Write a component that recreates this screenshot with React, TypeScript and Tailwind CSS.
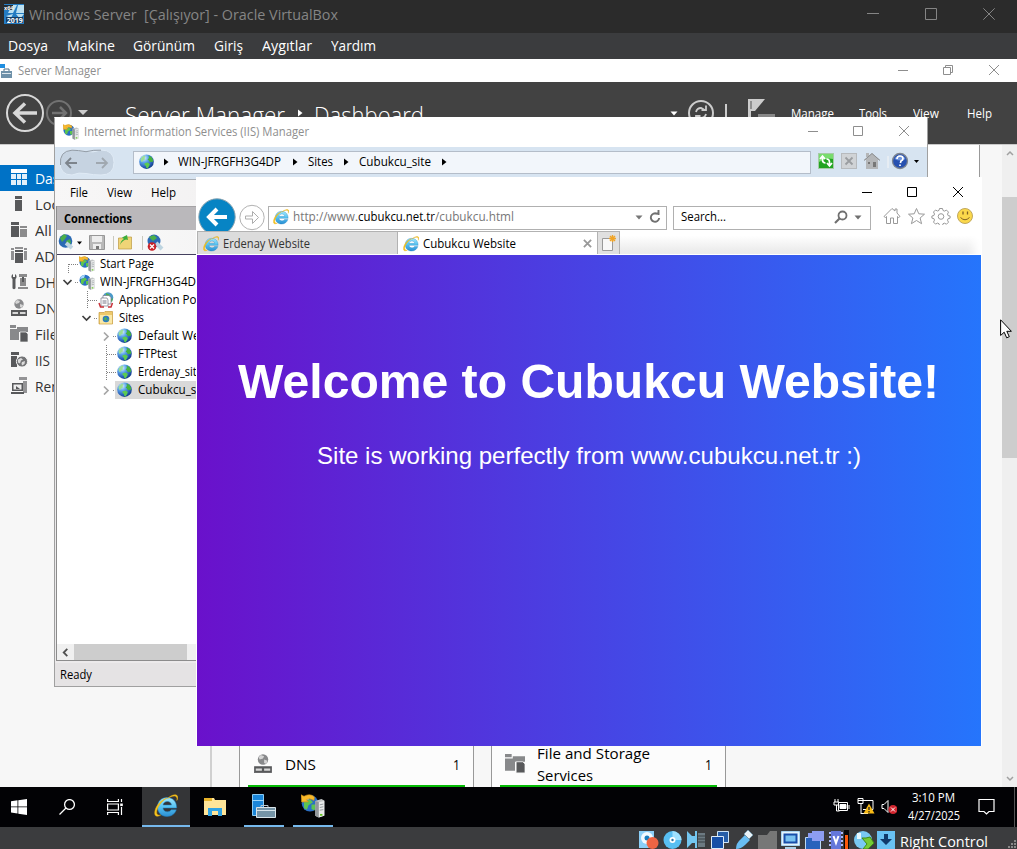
import { useLayoutEffect, useRef, useState } from "react";
import type { ReactNode } from "react";

/* Text run squeezed horizontally to a given advance width. */
function Label({ w, className = "", children }: { w: number; className?: string; children: ReactNode }) {
  const ref = useRef<HTMLSpanElement>(null);
  const [k, setK] = useState(1);
  useLayoutEffect(() => {
    if (ref.current && ref.current.offsetWidth) {
      const r = ref.current.getBoundingClientRect();
      setK((prev) => w / (r.width / prev));
    }
  }, [w]);
  return (
    <span className={`block shrink-0 whitespace-pre ${className}`} style={{ width: w }}>
      <span ref={ref} className="inline-block origin-left" style={{ transform: `scaleX(${k})` }}>
        {children}
      </span>
    </span>
  );
}

function Globe({ className = "size-4" }: { className?: string }) {
  return (
    <svg viewBox="0 0 16 16" className={`shrink-0 ${className}`}>
      <defs>
        <radialGradient id="sea" cx="0.33" cy="0.25" r="0.85">
          <stop offset="0" stopColor="#e0f4ff" />
          <stop offset="0.35" stopColor="#5ea6ec" />
          <stop offset="0.75" stopColor="#2259b2" />
          <stop offset="1" stopColor="#0c2f70" />
        </radialGradient>
      </defs>
      <circle cx="7.500" cy="7.700" r="7.300" fill="url(#sea)" />
      <path d="M1.500 5Q3 2 5.500 1.400l1 1.200-1 1.400.7 1.300-2 1.200-1 1.600-1.200-.6z" fill="#9bdd96" />
      <path d="M9.500 1.500l3 1.500 1.700 3.300-.6 2-1.300-.5-1.400.5-1-1.700L8.600 5.600 10 4z" fill="#45b23f" />
      <path d="M5.600 9.200l3-.8 2.200 1.600-.7 2.200-1.800 2.400-1-.5-.3-2.200-1.500-1.200z" fill="#5ccb50" />
    </svg>
  );
}

function IisIcon({ className = "size-4", gold = true }: { className?: string; gold?: boolean }) {
  return (
    <svg viewBox="0 0 16 16" className={`shrink-0 ${className}`}>
      <circle cx="6" cy="6.200" r="5.500" fill="#2a6fc6" />
      <path d="M1 5a5 5 0 0 1 5-4l-1 3z" fill="#a5d8fa" />
      <path d="M2 5.500l4-2 2 2-3 2-1 3-2-1zM7 7h3l-1 4-2-1z" fill="#5cc450" />
      {gold && <path d="M0 .5l2 1Q6-.8 9 2L8.600 4.300Q5.800 2.400 3.600 3.800L5 5.200 .4 5.400z" fill="#f8b92a" stroke="#c98a12" strokeWidth=".4" />}
      <path d="M9.500 4.600L13.600 3.400l2 1v10l-4 1.300-2.100-1.200z" fill="#c3c6c7" />
      <path d="M9.500 4.600l2.300.8v10.300l-2.300-1.200z" fill="#92979b" />
      <path d="M12 5.500l3.500-.9v9.900l-3.500 1.200z" fill="#e8eaea" />
      <path d="M12.500 7.200l2.400-.5M12.500 9l2.400-.5M12.500 10.800l2.400-.4" stroke="#8d9498" strokeWidth=".6" />
      <path d="M12.700 13.300h1.600v1.200h-1.600z" fill="#65c720" />
    </svg>
  );
}

function IeLogo({ className = "size-4" }: { className?: string }) {
  return (
    <svg viewBox="0 0 24 24" className={`shrink-0 ${className}`}>
      <defs>
        <linearGradient id="ie" x1="0" y1="0" x2="0" y2="1">
          <stop offset="0" stopColor="#a2e8fd" />
          <stop offset="0.5" stopColor="#55c1f0" />
          <stop offset="1" stopColor="#2a8ed2" />
        </linearGradient>
      </defs>
      <path
        fillRule="evenodd"
        fill="url(#ie)"
        stroke="#1f7fbf"
        strokeWidth=".5"
        d="M13 3.500c5.700 0 9.700 4 9.700 10.500H9c.2 2.300 1.900 3.800 4.300 3.800 1.800 0 3.200-.7 3.900-2h5.100C21 19.800 17.600 22.500 13 22.500 7.300 22.500 3.500 18.600 3.500 13S7.300 3.500 13 3.500zM9 11h8.500c-.3-2.200-1.900-3.500-4.100-3.500S9.400 8.800 9 11z"
      />
      <path
        fill="#f8c81c"
        stroke="#e0a818"
        strokeWidth=".5"
        d="M22.800 6.500c.5-2 .2-3.500-1-4.100-1.800-.9-5 0-8.300 2.100C16.700 1.500 20.700 0 22.800 1.300c1.400 1 1.300 3.200 0 5.200zM13 4C7 7.500 3 13.600 2.700 18c-.2 2.600 1.300 3.700 4 3-3.400 2.200-6 1.600-6-2C.7 13.500 6 6 13 4z"
      />
    </svg>
  );
}

type Pane = "min" | "max" | "restore" | "close";
function Ctl({ kind, big = false }: { kind: Pane; big?: boolean }) {
  return (
    <svg viewBox="0 0 12 12" className="size-3 shrink-0" fill="none" stroke="currentColor" strokeWidth="1">
      {kind === "min" && <path d={big ? "M0 5.500h12" : "M2 6.500h10"} />}
      {kind === "max" && <path d={big ? "M.5 .5h11v11H.5z" : "M1.500 1.500h9v9h-9z"} />}
      {kind === "restore" && <path d="M1.500 3.500h7v7h-7zM3.500 3.500v-2h7v7h-2" />}
      {kind === "close" && <path d={big ? "M.3 .3l11.400 11.400M11.700 .3L.3 11.700" : "M1 1l10 10M11 1L1 11"} />}
    </svg>
  );
}

function Tri({ className = "", down = false }: { className?: string; down?: boolean }) {
  return (
    <svg viewBox="0 0 8 8" className={`size-2 shrink-0 ${className}`} fill="currentColor">
      <path d={down ? "M.5 2.500h7L4 6.500z" : "M2 .5v7L6.500 4z"} />
    </svg>
  );
}

function SideIcon({ kind, className = "size-[18px]" }: { kind: string; className?: string }) {
  return (
    <svg viewBox="0 0 18 18" className={`shrink-0 ${className}`} fill="#58595b">
      {kind === "dash" && (
        <>
          <path fill="#fff" d="M1 0h16v4H1z" />
          <path fill="#e3f0fa" d="M1 5h5v5H1zM7 5h4v5H7zM12 5h5v5h-5zM1 11h5v5H1zM7 11h4v5H7zM12 11h5v5h-5z" />
        </>
      )}
      {kind === "local" && <path d="M5 1h7v3H5zM5 5h7v11H5z" />}
      {kind === "all" && (
        <>
          <path d="M1 1h8v3H1zM1 5h8v11H1z" />
          <path fill="#8b8b8c" d="M10 5h7v2h-7zM10 8h7v8h-7z" />
        </>
      )}
      {kind === "ad" && (
        <>
          <path fill="#909092" d="M1 1h3v2H1zM1 4h3v9H1zM14 1h3v2h-3zM14 4h3v9h-3zM5 0h8v2H5z" />
          <path d="M5 3h8v2H5zM5 6h8v10H5z" />
        </>
      )}
      {kind === "dhcp" && (
        <>
          <path d="M3 1v3h2V1c2 1 2 4 .5 5v9c0 1.500-3 1.500-3 0V6C1 5 1 2 3 1z" />
          <path fill="#8b8b8c" d="M9 1h8v3H9zM10 5h6v8h-6zM8 14h10v2H8z" />
          <path d="M12 4h2v5h-2z" />
        </>
      )}
      {kind === "dns" && (
        <>
          <circle cx="9" cy="5" r="4.700" fill="#88898b" />
          <path d="M7 1l3 1-1 2-3 1-1-2zM10 5l3 1-1 3-2-1z" fill="#d4d4d4" />
          <path d="M1 11h16v6H1z" />
          <path fill="#d8d8d8" d="M2.500 13h5.500v2H2.500zM10 13h5.500v2H10z" />
        </>
      )}
      {kind === "file" && (
        <>
          <path fill="#88898b" d="M0 0h6v3H0zM0 4h9v11H0zM7 2h11v5H9V4H7z" />
          <path d="M10 7h6l2 2v8h-8z" stroke="#f5f5f5" strokeWidth=".7" />
        </>
      )}
      {kind === "iis" && (
        <>
          <path d="M1 1h8v3H1zM1 5h6v11H1z" />
          <circle cx="12" cy="10.500" r="5.600" fill="#737476" stroke="#f7f7f7" />
          <path fill="#dcdcdc" d="M8 8.500l3-1.500 2 1.500-2 1-1 3-2-1zM12 11l3-1-.5 3-2.500 1.500-.5-2z" />
        </>
      )}
      {kind === "remote" && (
        <>
          <path fill="#949496" d="M9 0h8v3H9zM13 4h4v12h-4z" />
          <path d="M2 6h11v8H2zM1 15h13v2H1z" />
          <path fill="#eee" d="M3.500 7.500h8v5h-8z" />
          <path d="M6 12V9l4 3z" />
        </>
      )}
    </svg>
  );
}

const roles: [string, string, number][] = [
  ["dash", "Dashboard", 72],
  ["local", "Local Server", 83],
  ["all", "All Servers", 72],
  ["ad", "AD DS", 42],
  ["dhcp", "DHCP", 39],
  ["dns", "DNS", 31],
  ["file", "File and Storage Services", 166],
  ["iis", "IIS", 15],
  ["remote", "Remote Access", 96],
];

function ServerManager() {
  return (
    <section className="flex h-[728px] flex-col bg-[#f7f7f7]">
      <header className="flex h-[23px] items-center bg-white text-[12px] text-[#8e8e8e]">
        <svg viewBox="0 0 13 14" className="h-[14px] w-[13px]">
          <path d="M0 0h5v4H0z" fill="#1f8ee0" />
          <path d="M1 7h11v7H1z" fill="#6f91a9" />
          <path d="M4 7V5h5v2" fill="none" stroke="#506f84" />
          <path d="M2 9.500h9" stroke="#dfe8ee" />
        </svg>
        <Label w={83} className="ml-[5px]">Server Manager</Label>
        <div className="mb-px ml-auto mr-[17px] flex gap-[34px]">
          <Ctl kind="min" /><Ctl kind="restore" /><Ctl kind="close" />
        </div>
      </header>
      <div className="flex h-[63px] items-center border-b border-[#c9c9c9] bg-[#424242] text-white">
        <svg viewBox="0 0 90 40" className="ml-[5px] h-10 w-[90px] shrink-0" fill="none">
          <circle cx="20" cy="20" r="18" stroke="#d8d8d8" strokeWidth="2" />
          <path d="M32 20H10M20 10.500L10 20l10 9.500" stroke="#d8d8d8" strokeWidth="3.500" />
          <circle cx="54" cy="20" r="12" stroke="#727272" strokeWidth="2" />
          <path d="M47 20h13M55 14l6 6-6 6" stroke="#727272" strokeWidth="2.500" />
          <path d="M73 17h10l-5 5z" fill="#ccc" />
        </svg>
        <Label w={160} className="ml-[30px] pt-[3px] text-[24px] font-light">Server Manager</Label>
        <Tri className="ml-[11px]" />
        <Label w={110} className="ml-[10px] pt-[3px] text-[24px] font-light">Dashboard</Label>
        <Tri down className="ml-[246px]" />
        <svg viewBox="0 0 90 32" className="ml-[9px] h-8 w-[90px] shrink-0" fill="none" stroke="#ccc">
          <circle cx="14" cy="16" r="12" strokeWidth="2" />
          <path d="M9 15q1-4 5-4l3 1.500M19 8.500v4.500h-4.500M19 17q-1 4-5 4l-3-1.500M9 23.500V19h4.500" strokeWidth="1.800" />
          <path d="M39 7v16" strokeWidth="2" />
          <path d="M61 2h17l-10 12h-4v15h-3z" fill="#ccc" stroke="none" />
          <path d="M64 4v8" stroke="#555" />
          <path d="M71 18.500h17" strokeWidth="3" stroke="#888" />
        </svg>
        <nav className="ml-[14px] flex pt-[2px] text-[12px]">
          <Label w={43}>Manage</Label>
          <Label w={28} className="ml-[25px]">Tools</Label>
          <Label w={26} className="ml-[26px]">View</Label>
          <Label w={25} className="ml-[28px]">Help</Label>
        </nav>
      </div>
      <div className="flex min-h-0 flex-1">
        <nav className="w-[210px] overflow-hidden pt-[20px]">
          {roles.map(([icon, name, w], i) => (
            <div key={name} className={`flex h-[26px] items-center pl-[10px] text-[15px] ${i === 0 ? "bg-[#0072c6] text-white" : "text-[#333]"}`}>
              <SideIcon kind={icon} />
              <Label w={w} className="ml-[7px]">{name}</Label>
            </div>
          ))}
        </nav>
        <main className="flex flex-1 flex-col justify-between border-l-2 border-[#d0d0d0]">
          <div className="h-[34px] w-[768px] border-r border-[#999] bg-white" />
          <div className="flex gap-[17px] pl-[27px]">
            <div className="flex h-[43px] w-[235px] flex-col border-x border-[#999] bg-[#fcfcfc]">
              <div className="flex min-h-0 flex-1 items-center pb-px pl-[13px] text-[15px] text-black">
                <SideIcon kind="dns" className="size-5" />
                <Label w={31} className="ml-[12px]">DNS</Label>
                <Label w={7} className="ml-auto mr-[13px]">1</Label>
              </div>
              <div className="mx-2 h-[2px] bg-[#05bb05]" />
            </div>
            <div className="flex h-[43px] w-[235px] flex-col border-x border-[#999] bg-[#fcfcfc]">
              <div className="flex min-h-0 flex-1 items-center pb-px pl-[13px] text-[15px] text-black">
                <SideIcon kind="file" className="size-5" />
                <div className="ml-[12px] leading-[22px]">
                  <Label w={113}>File and Storage</Label>
                  <Label w={56}>Services</Label>
                </div>
                <Label w={7} className="ml-auto mr-[13px]">1</Label>
              </div>
              <div className="mx-2 h-[2px] shrink-0 bg-[#05bb05]" />
            </div>
          </div>
        </main>
        <div className="flex w-[15px] flex-col items-center bg-[#efefef] text-[#a0a0a0]">
          <svg viewBox="0 0 8 6" className="mt-[5px] h-[6px] w-2" fill="none" stroke="currentColor" strokeWidth="1.500"><path d="M1 5l3-3 3 3" /></svg>
          <div className="mt-[41px] h-[261px] w-full bg-[#cdcdcd]" />
          <svg viewBox="0 0 8 6" className="mt-auto mb-[5px] h-[6px] w-2" fill="none" stroke="currentColor" strokeWidth="1.500"><path d="M1 1l3 3 3-3" /></svg>
        </div>
      </div>
    </section>
  );
}

function Chevron({ open }: { open: boolean }) {
  return (
    <svg viewBox="0 0 10 10" className="size-[10px] shrink-0" fill="none" stroke={open ? "#404040" : "#a6a6a6"} strokeWidth="1.700">
      <path d={open ? "M1.500 3l4 4 4-4" : "M4 1.500l4 4-4 4"} />
    </svg>
  );
}

function PoolIcon() {
  return (
    <svg viewBox="0 0 16 16" className="size-4 shrink-0">
      <circle cx="10" cy="5.500" r="5.300" fill="#4b9ac9" />
      <path d="M8 1l4 2-1 3-3-1zM12 8l3-2-1 4z" fill="#4eb24c" />
      <path d="M5 3.500h6l2 2V12H5z" fill="#fff" stroke="#778" strokeWidth=".7" />
      <path d="M3 6h6l1 2v6H3z" fill="#fff" stroke="#778" strokeWidth=".7" />
      <path d="M4.500 9h4M4.500 11h4" stroke="#778" />
      <path d="M1 11l1.500 4H6M14.500 11L13 15h-3" fill="none" stroke="#c8323a" strokeWidth="1.500" />
    </svg>
  );
}

function FolderGlobe() {
  return (
    <svg viewBox="0 0 16 16" className="size-4 shrink-0">
      <path d="M1 2.500h5l1-1h7.500v12.500H1z" fill="#edc96b" stroke="#c79b3f" strokeWidth=".7" />
      <path d="M2 5h12v8.500H2z" fill="#fae8a8" />
      <circle cx="8" cy="9" r="3.300" fill="#2c7ac0" />
      <path d="M6 8l2-1 1 2-2 2zM9 10l2-1-1 2z" fill="#52b64b" />
    </svg>
  );
}

type Branch = "open" | "closed" | "start" | "leaf";
function TreeRow({ pad, branch, icon, w, text, selected = false }: { pad: string; branch: Branch; icon: ReactNode; w: number; text: string; selected?: boolean }) {
  const expandable = branch === "open" || branch === "closed";
  return (
    <div className={`flex h-[18px] items-center ${pad}`}>
      <div className="flex w-[18px] shrink-0 items-center justify-end">
        {expandable ? (
          <>
            <Chevron open={branch === "open"} />
            <span className="ml-[3px] mr-[1px] w-[3px] border-b border-dotted border-[#888]" />
          </>
        ) : (
          <svg viewBox="0 0 12 18" className="h-[18px] w-3 shrink-0" fill="none" stroke="#808080" strokeDasharray="1 1">
            <path d={branch === "start" ? "M1.500 9v9M2 9.500h10" : "M1.500 0v18M2 9.500h9"} />
          </svg>
        )}
      </div>
      <div className={`flex h-full items-center ${selected ? "-ml-[2px] bg-[#d9d9d9] pl-[2px] pr-3" : ""}`}>
        {icon}
        <Label w={w} className="ml-[5px]">{text}</Label>
      </div>
    </div>
  );
}

function IisManager() {
  return (
    <section className="absolute left-[54px] top-[58px] flex h-[570px] w-[874px] flex-col border border-[#a0a0a0] border-t-[#fff] bg-[#eceaeb] text-[12px] text-black">
      <header className="flex h-[29px] shrink-0 items-center bg-white pb-px pl-[8px] text-[#8e8e8e]">
        <IisIcon />
        <Label w={225} className="ml-[5px]">Internet Information Services (IIS) Manager</Label>
        <div className="mb-[2px] ml-auto mr-[17px] flex gap-[34px]"><Ctl kind="min" /><Ctl kind="max" /><Ctl kind="close" /></div>
      </header>
      <div className="flex h-[33px] shrink-0 items-center border-b border-[#a9afb6] bg-[#d7e4f1] pb-[2px] pl-[4px]">
        <svg viewBox="0 0 56 27" className="h-[27px] w-[56px] shrink-0">
          <path d="M13 1Q20 1 27 2.500T42 1Q55 1 55 13.500T42 26Q34 26 27 24.500T13 26Q1 26 1 13.500T13 1z" fill="#c6d3e1" stroke="#e0ebf6" />
          <path d="M1.500 16Q0 2 13 1.200q6 0 14 1.500 8-2 15-1.500" fill="none" stroke="#929ba5" />
          <path d="M18 14H7M12 9l-5 5 5 5" fill="none" stroke="#7d848c" strokeWidth="1.800" />
          <path d="M37 14h11M43 9l5 5-5 5" fill="none" stroke="#a0a8b0" strokeWidth="1.800" />
        </svg>
        <div className="ml-[18px] flex h-[23px] w-[678px] items-center border border-[#b4bdc9] bg-[#f2f6fb] pl-[5px]">
          <Globe />
          <Tri className="ml-[7px]" />
          <Label w={103} className="ml-[8px]">WIN-JFRGFH3G4DP</Label>
          <Tri className="ml-[10px]" />
          <Label w={25} className="ml-[9px]">Sites</Label>
          <Tri className="ml-[9px]" />
          <Label w={72} className="ml-[9px]">Cubukcu_site</Label>
          <Tri className="ml-[9px]" />
        </div>
        <svg viewBox="0 0 104 20" className="ml-[5px] h-5 w-[104px] shrink-0">
          <rect x="2.500" y="1.500" width="15" height="15" fill="#22a422" stroke="#a5cba5" />
          <path d="M3 2h14v5q-7-2-14 3z" fill="#78dc6e" />
          <path d="M9.500 11q-3 0-3-3V5M4 7l2.500-3L9 7M10.500 7q3 0 3 3v3M11 11l2.500 3 2.500-3" stroke="#fff" strokeWidth="1.700" fill="none" />
          <rect x="25.500" y="1.500" width="15" height="15" fill="#d0d3d6" stroke="#b7babd" />
          <path d="M29.500 5.500l7 7M36.500 5.500l-7 7" stroke="#9a9da0" strokeWidth="1.800" />
          <path d="M48 8l8-7 8 7h-2v9H50V8zM50 1h3v4h-3z" fill="#b4b6b8" />
          <path d="M48 8.500l8-7 8 7" fill="none" stroke="#8c8e90" />
          <path d="M52 10h2v2h-2zM57 10h3v5h-3z" fill="#777" />
          <path d="M72 4v12" stroke="#f5f5f5" />
          <circle cx="84" cy="9" r="7.500" fill="#2650b0" stroke="#7d8590" strokeWidth="1.300" />
          <path d="M78.500 7a6 6 0 0 1 11 0q-5 3-11 0" fill="#6d94df" />
          <path d="M81 7q0-3 3-3t3 2.500q0 1.700-2 2.500l-.6 2M84 12.500v1.500" stroke="#fff" strokeWidth="1.700" fill="none" />
          <path d="M98 8h5l-2.500 3z" />
        </svg>
      </div>
      <nav className="flex h-[26px] shrink-0 items-center bg-gradient-to-r from-[#f8f7f7] to-[#dedcdd] pl-[15px]">
        <Label w={18}>File</Label>
        <Label w={25} className="ml-[19px]">View</Label>
        <Label w={25} className="ml-[19px]">Help</Label>
      </nav>
      <div className="ml-[1px] flex min-h-0 flex-1 flex-col border-b border-l border-[#8c8c8c] bg-white">
        <div className="flex h-[24px] shrink-0 items-center border-t border-[#a5a3a5] bg-[#bab8bb] pl-[7px] pt-px font-bold"><Label w={68}>Connections</Label></div>
        <div className="flex h-[25px] shrink-0 items-center border-b border-[#44405e] bg-gradient-to-r from-[#fafafa] to-[#dedcdd] pl-[1px] pt-px">
          <svg viewBox="0 0 110 20" className="h-5 w-[110px]">
            <circle cx="7.500" cy="8" r="6.800" fill="#2b6ab5" />
            <path d="M2 5l4-4 3 2-2 3-3 3zM8 8l4-2 1 4-4 3z" fill="#4aaf4a" />
            <path d="M8 10l6 5" stroke="#bed4e0" strokeWidth="4" />
            <path d="M19 8.500h5l-2.500 3z" />
            <path d="M31.500 2.500h15v14h-15z" fill="#b9b9b9" stroke="#979797" />
            <path d="M34 3h10v6H34zM35 11h8v5h-8z" fill="#ededed" /><path d="M38 13h3v3h-3z" fill="#777" />
            <path d="M55.500 3v14M84.500 3v14" stroke="#c9c8bd" />
            <path d="M60.500 5h5l1-1h7v12h-13z" fill="#efd477" stroke="#bb9944" strokeWidth=".7" />
            <path d="M62 12q1-5 4-6l-2-1.500 5-2.500 1 5-2-.5q-4 1-6 5.500z" fill="#3cae3c" />
            <circle cx="96" cy="8" r="6.500" fill="#2b6ab5" /><path d="M91 4l5-2 3 3-4 3z" fill="#4aaf4a" />
            <path d="M98 10l6 6" stroke="#bed4e0" strokeWidth="4" />
            <circle cx="94" cy="13.500" r="4.300" fill="#c92127" /><path d="M92 11.500l4 4m0-4l-4 4" stroke="#fff" strokeWidth="1.300" />
          </svg>
        </div>
        <div className="flex-1">
          <TreeRow pad="pl-[4px]" branch="start" icon={<IisIcon />} w={54} text="Start Page" />
          <TreeRow pad="pl-[4px]" branch="open" icon={<IisIcon gold={false} />} w={103} text="WIN-JFRGFH3G4DP" />
          <TreeRow pad="pl-[23px]" branch="leaf" icon={<PoolIcon />} w={93} text="Application Pools" />
          <TreeRow pad="pl-[23px]" branch="open" icon={<FolderGlobe />} w={25} text="Sites" />
          <TreeRow pad="pl-[42px]" branch="closed" icon={<Globe />} w={93} text="Default Web Site" />
          <TreeRow pad="pl-[42px]" branch="leaf" icon={<Globe />} w={39} text="FTPtest" />
          <TreeRow pad="pl-[42px]" branch="leaf" icon={<Globe />} w={65} text="Erdenay_site" />
          <TreeRow pad="pl-[42px]" branch="closed" icon={<Globe />} w={72} text="Cubukcu_site" selected />
        </div>
        <div className="flex h-[16px] shrink-0 items-center bg-[#f0f0f0]">
          <svg viewBox="0 0 10 10" className="ml-[4px] size-[9px]" fill="none" stroke="#505050" strokeWidth="2"><path d="M7 1L3 5l4 4" /></svg>
          <div className="ml-[4px] h-full w-[113px] bg-[#cdcdcd]" />
        </div>
      </div>
      <footer className="mt-[2px] flex h-[23px] shrink-0 items-center bg-[#e5e3e4] pl-[5px] pt-px"><Label w={32}>Ready</Label></footer>
    </section>
  );
}

function Browser() {
  return (
    <section className="absolute left-[196px] top-[118px] flex h-[569px] w-[786px] flex-col bg-white pl-px text-[12px] text-black">
      <div className="flex h-[27px] shrink-0 items-center justify-end gap-[34px] pr-[18px] pt-[3px]">
        <Ctl kind="min" /><Ctl kind="max" /><Ctl kind="close" />
      </div>
      <div className="flex h-[27px] shrink-0 items-center">
        <svg viewBox="0 0 70 40" className="-my-[7px] ml-px h-10 w-[70px] shrink-0" fill="none">
          <circle cx="19" cy="19" r="18.200" fill="#0784c4" stroke="#8aa4b1" />
          <path d="M29 19H10M19 11l-8 8 8 8" stroke="#fff" strokeWidth="4" />
          <circle cx="54" cy="19.500" r="12.200" stroke="#b2b2b2" />
          <path d="M47.500 18h7v-4.500l6 6-6 6V21h-7z" stroke="#adadad" />
        </svg>
        <div className="flex h-[24px] w-[399px] items-center border border-[#b0b0b0] pb-px pl-[4px] text-[#777]">
          <IeLogo />
          <Label w={65} className="ml-[4px]">http://www.</Label>
          <Label w={77} className="text-black">cubukcu.net.tr</Label>
          <Label w={79}>/cubukcu.html</Label>
          <Tri down className="ml-auto" />
          <svg viewBox="0 0 14 14" className="ml-[5px] mr-[4px] size-[14px]" fill="none" stroke="#707070" strokeWidth="1.900">
            <path d="M9 3.800A4.200 4.200 0 1 0 11.200 8M7 3.500h4.500M10.500 0v5" />
          </svg>
        </div>
        <div className="ml-[6px] flex h-[24px] w-[198px] items-center border border-[#b0b0b0] pb-px pl-[7px]">
          <Label w={45}>Search...</Label>
          <svg viewBox="0 0 14 14" className="ml-auto size-[14px]" fill="none" stroke="#707070"><circle cx="8.500" cy="5.500" r="4" strokeWidth="1.800" /><path d="M5.500 8.500L1 13" strokeWidth="2.200" /></svg>
          <Tri down className="ml-[6px] mr-[8px] text-[#707070]" />
        </div>
        <svg viewBox="0 0 92 18" className="-mt-[3px] ml-[12px] h-[18px] w-[92px] shrink-0" fill="none" stroke="#999">
          <path d="M1 9.500l8-8L12 4V2h2v4l3 3.500-1.500 1-1-1v7h-4V11H7.500v5.500h-4v-7l-1 1z" />
          <path d="M33.500 1.500l2.300 5.300 5.700.4-4.400 3.800 1.500 5.700-5.100-3.200-5.100 3.200 1.500-5.700-4.400-3.800 5.700-.4z" />
          <path d="M56.500 1.500h3l.5 2 1.500.6 2-1 2 2-1 2 .6 1.500 2 .5v2l-2 .6-.6 1.500 1 2-2 2-2-1-1.500.5-.5 2h-3l-.5-2-1.500-.6-2 1-2-2 1-2-.6-1.500-2-.5V9l2-.5.6-1.500-1-2 2-2 2 1 1.500-.6z" />
          <circle cx="58" cy="9.500" r="2.800" />
          <circle cx="82" cy="9" r="7.500" fill="#fbd84b" stroke="#c1a85d" />
          <path d="M80 4.500v3M84.500 4.500v3" stroke="#806024" strokeWidth="1.300" /><path d="M77.500 10.500q4.500 4.500 9 0" stroke="#806024" />
        </svg>
      </div>
      <div className="flex h-[23px] shrink-0 bg-gradient-to-b from-white from-20% to-[#e8e8e8] shadow-[inset_-12px_0_10px_-4px_white]">
        <div className="flex h-full w-[201px] items-center border border-b-0 border-[#b2b2b2] bg-[#dcdcdc] pl-[5px] pt-px text-[#333]">
          <IeLogo /><Label w={87} className="ml-[4px]">Erdenay Website</Label>
        </div>
        <div className="flex h-full w-[199px] items-center border-t border-[#b2b2b2] bg-white pl-[5px] pt-px">
          <IeLogo /><Label w={93} className="ml-[4px]">Cubukcu Website</Label>
          <svg viewBox="0 0 10 10" className="mb-px ml-auto mr-[5px] size-[9px]" stroke="#999" strokeWidth="2"><path d="M1 1l8 8M9 1L1 9" /></svg>
        </div>
        <div className="flex h-full w-[23px] items-center justify-center border border-b-0 border-[#b2b2b2] bg-[#e0e0e0]">
          <svg viewBox="0 0 16 16" className="size-4"><path d="M1.500 3.500h10v12h-10z" fill="#f8f8f8" stroke="#999" /><path d="M11.500 0v7M8 3.500h7M9 1l5 5M14 1L9 6" stroke="#f0a427" strokeWidth="1.400" /></svg>
        </div>
      </div>
      <div className="mt-px flex h-[491px] w-[784px] shrink-0 flex-col items-center bg-[linear-gradient(90deg,#6a11cb_0%,#2575fc_100%)] pt-[99px] text-white [font-family:'Liberation_Sans',Arial,sans-serif]">
        <h1 className="-ml-px font-bold text-[48px] leading-[55px]"><Label w={701}>Welcome to Cubukcu Website!</Label></h1>
        <p className="mt-[33px] text-[24px] leading-[28px]"><Label w={544}>Site is working perfectly from www.cubukcu.net.tr :)</Label></p>
      </div>
    </section>
  );
}

function Taskbar() {
  return (
    <footer className="flex h-[40px] bg-[#020205] text-[12px] text-white">
      <div className="flex w-[142px] items-center">
        <svg viewBox="0 0 16 16" className="ml-[11px] size-4" fill="#fff"><path d="M0 2.300L6.500 1.300v6.200H0zM7.300 1.200L16 0v7.500H7.300zM0 8.300h6.500v6.200L0 13.600zM7.300 8.300H16V16l-8.700-1.300z" /></svg>
        <svg viewBox="0 0 16 16" className="ml-[32px] size-4" fill="none" stroke="#fff" strokeWidth="1.300"><circle cx="10.500" cy="5.500" r="4.900" /><path d="M7 9l-6.500 6.500" /></svg>
        <svg viewBox="0 0 16 16" className="ml-[32px] size-4" fill="none" stroke="#fff" strokeWidth="1.200"><path d="M.6 0v2.500h10.800V0M.6 5h10.800v6H.6zM.6 16v-2.500h10.800V16M14.500 0v3M14.500 8v8" /><path d="M13.200 4.500h2.600v2.600h-2.600z" fill="#fff" stroke="none" /></svg>
      </div>
      <div className="flex w-[48px] items-center justify-center border-b-2 border-[#76b9ed] bg-[#343537]"><IeLogo className="size-6" /></div>
      <div className="flex w-[54px] items-center justify-center">
        <svg viewBox="0 0 22 20" className="mb-px mr-1 h-5 w-[22px]"><path d="M0 1h10l1 2h11v15H0z" fill="#ffe599" /><path d="M0 1h8v3H0z" fill="#e8b32b" /><path d="M4 19v-8h14v8h-4v-5H8v5z" fill="#30a4e5" /></svg>
      </div>
      <div className="flex w-[40px] items-center justify-center border-b-2 border-[#76b9ed]">
        <svg viewBox="0 0 24 24" className="size-6"><path d="M.5 .5h11v21H.5z" fill="#1b86d9" stroke="#8bcbf3" /><path d="M0 6.500h12" stroke="#9bd6fa" /><path d="M9 13v-1.500h7V13" fill="none" stroke="#b9c9d4" /><path d="M4.500 13.500h19v10h-19z" fill="#7594a7" stroke="#d9e4ea" /><path d="M5 16.500h18" stroke="#d5e3ea" /></svg>
      </div>
      <div className="ml-[9px] flex w-[40px] items-center justify-center border-b-2 border-[#76b9ed]"><IisIcon className="size-6" /></div>
      <svg viewBox="0 0 64 20" className="ml-auto mt-[10px] h-5 w-16 shrink-0" fill="none" stroke="#fff">
        <path d="M1 5h5v3H1zM2 5V2M5 5V2M3.500 8v6h3" /><path d="M5.500 5.500h9v8h-9z" fill="#020205" /><path d="M7 7.500h6v4H7z" fill="#fff" /><path d="M16 8v4" />
        <path d="M25 3.500h15v9H30M25 1.500h5v5h-5zM28 7v10M28 16.500h7" />
        <path d="M36 6.500l5.500 10h-11z" fill="#f8ba16" stroke="none" /><path d="M36 10v3M36 14v1.500" stroke="#222" strokeWidth="1.300" />
        <path d="M49 7.500h2l4-4v12l-4-4h-2z" /><circle cx="60" cy="12.500" r="4.600" fill="#d3262f" stroke="none" /><path d="M58 10.500l4 4m0-4l-4 4" />
      </svg>
      <div className="ml-[10px] flex w-[53px] flex-col items-center justify-center leading-[18px]">
        <Label w={43}>3:10 PM</Label><Label w={52}>4/27/2025</Label>
      </div>
      <svg viewBox="0 0 18 18" className="ml-[18px] mr-[18px] mt-[11px] size-[18px]" fill="none" stroke="#fff" strokeWidth="1.200"><path d="M1 1.500h15v12h-5l-2.500 2.500L6 13.500H1z" /></svg>
      <div className="w-[3px] border-l border-[#555]" />
    </footer>
  );
}

function StatusIcons() {
  return (
    <svg viewBox="0 0 258 20" className="mt-[3px] h-5 w-[258px] shrink-0">
      <path d="M0 1h15v17H0z" fill="#8bcff7" /><circle cx="8" cy="8" r="6" fill="#f2faff" /><circle cx="8" cy="8" r="2.500" fill="#187dbf" /><circle cx="13.500" cy="13" r="6" fill="#ef6543" />
      <circle cx="33.500" cy="10" r="9" fill="#58bff2" /><path d="M33.500 1a9 9 0 0 1 9 9h-9z" fill="#a0e2ff" /><circle cx="33.500" cy="10" r="3" fill="#fff" /><circle cx="33.500" cy="10" r="1.200" fill="#2775a6" />
      <path d="M48 1l5 5h3V1h2v17h-2v-5h-3l-5 5z" fill="#73c6f0" /><path d="M59 3h7v14h-7z" fill="#6c7a82" /><path d="M59 6h7M59 9h7M59 12h7" stroke="#384044" />
      <path d="M78.500 1.500h11v11h-11z" fill="#265ea8" stroke="#cce4f8" /><path d="M72.500 6.500h12v12h-12z" fill="#164fa6" stroke="#dcebf7" />
      <path d="M97 19q0-6 5-10l4-4 5 5-5 5q-4 4-9 4z" fill="#68bdf3" /><path d="M105 4l4-4 5 5-4 4z" fill="#e9f2f7" stroke="#7797aa" />
      <path d="M119 5h9l3-4h7v18h-19z" fill="#777" />
      <path d="M142.500 1.500h18v14h-18z" fill="#e2f3fd" stroke="#a9d3ef" /><path d="M145.500 4.500h12v8h-12z" fill="#79c2f1" stroke="#184eaa" strokeWidth="2" /><path d="M146 17h11v2h-11z" fill="#aacfe8" />
      <path d="M166.500 7.500h15v12h-15z" fill="#2862bc" stroke="#bcdaf4" /><path d="M169 3h4v-2h12v10h-12V8h-4z" fill="#8d9df1" />
      <path d="M192 1h10v18h-10z" fill="#6477da" /><path d="M190 3h2M190 7h2M190 11h2M190 15h2M202 3h2M202 7h2M202 11h2M202 15h2" stroke="#adbafa" strokeWidth="2" /><path d="M194.500 6l2.500 7 2.500-7" stroke="#fff" fill="none" strokeWidth="2" />
      <path d="M205 0h5v20h-5z" fill="#080808" /><path d="M206 5h3v15h-3z" fill="#fc590b" />
      <circle cx="224" cy="10" r="9" fill="#79c9f2" /><path d="M218 3h4v6h-4z" fill="#e9faff" /><path d="M223 8h4l4-1 4 6-6 6h-5l4-5z" fill="#76cc35" stroke="#3f8c17" />
      <path d="M238 1h18v18h-18z" fill="#69c1f2" /><path d="M245 4h4v5h4l-6 6-6-6h4z" fill="#10396a" />
    </svg>
  );
}

export default function App() {
  return (
    <div className="flex h-[849px] w-[1017px] flex-col overflow-hidden bg-[#3b3c3e] [font-family:'Open_Sans','Noto_Sans',sans-serif]">
      <header className="flex h-[33px] shrink-0 items-center bg-[#2b2b2b] pb-[5px] pl-[4px] text-[15px] text-[#858585]">
        <svg viewBox="0 0 20 20" className="size-5 shrink-0">
          <path d="M0 0h20v20H0z" fill="#247cc2" /><path d="M8 1h5l-4 8H4zM14 1h6v8h-8zM2 12l7-2-2 4zM12 10h8l-4 5z" fill="#bce0f1" /><path d="M0 1h9v5H0z" fill="#222c34" /><path d="M2 13h17v6H2z" fill="#173e65" />
          <text x="0" y="5.500" fontSize="5.500" fontWeight="700" fill="#fff">x64</text>
          <text x="2.800" y="18.500" fontSize="7" fontWeight="700" fill="#fff">2019</text>
        </svg>
        <Label w={309} className="ml-[5px]">{"Windows Server  [Çalışıyor] - Oracle VirtualBox"}</Label>
        <div className="ml-auto mr-[22px] flex gap-[46px]"><Ctl kind="min" big /><Ctl kind="max" big /><Ctl kind="close" big /></div>
      </header>
      <nav className="flex h-[26px] shrink-0 items-center pb-[2px] pl-[8px] text-[15px] text-white">
        <Label w={40}>Dosya</Label>
        <Label w={48} className="ml-[19px]">Makine</Label>
        <Label w={62} className="ml-[18px]">Görünüm</Label>
        <Label w={29} className="ml-[19px]">Giriş</Label>
        <Label w={50} className="ml-[19px]">Aygıtlar</Label>
        <Label w={45} className="ml-[19px]">Yardım</Label>
      </nav>
      <div className="relative h-[768px] shrink-0 overflow-hidden">
        <ServerManager />
        <IisManager />
        <Browser />
        <Taskbar />
        <svg viewBox="0 0 12 20" className="absolute left-[1000px] top-[260px] h-5 w-3"><path d="M.6.8v15.700l3.600-3.300 2.500 5.600 2.600-1.100-2.500-5.400h4.600z" fill="#fff" stroke="#000" /></svg>
      </div>
      <footer className="flex h-[22px] shrink-0 items-center pl-[639px] text-[15px] text-white">
        <StatusIcons />
        <Label w={88} className="ml-[3px] mt-[6px] leading-[15px]">Right Control</Label>
        <svg viewBox="0 0 9 9" className="ml-auto mt-auto size-[9px]" fill="#888"><path d="M6 0h2v2H6zM3 3h2v2H3zM6 3h2v2H6zM0 6h2v2H0zM3 6h2v2H3zM6 6h2v2H6z" /></svg>
      </footer>
    </div>
  );
}
